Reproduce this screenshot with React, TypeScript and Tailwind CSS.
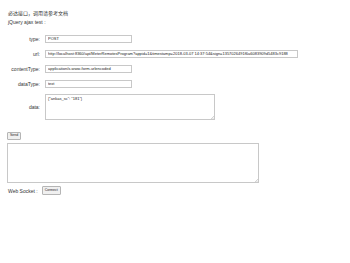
import React from 'react';

const font = { fontFamily: '"Liberation Sans", Arial, "Noto Sans CJK SC", sans-serif' };

const inputCls = 'block h-[8px] border border-[#c8c8c8] bg-white px-[2px] text-[4px] leading-[6px] text-[#222] outline-none';

const Row: React.FC<{ label: string; children: React.ReactNode }> = ({ label, children }) => (
  <div className="flex items-center h-[15px]">
    <div className="w-[41px] text-right text-[5px] leading-[6px] text-[#333] pr-[1px]">{label}</div>
    <div className="ml-[4px] flex">{children}</div>
  </div>
);

const Grip: React.FC = () => (
  <svg width="3" height="3" viewBox="0 0 3 3" className="absolute right-[1px] bottom-[1px]">
    <path d="M0 3 L3 0 M1.5 3 L3 1.5" stroke="#aaa" strokeWidth="0.5" />
  </svg>
);

const App: React.FC = () => {
  return (
    <div className="w-[350px] h-[263px] bg-white text-black leading-none" style={font}>
      <div className="pt-[9px] pl-[8px] text-[5px] leading-[9px] text-[#333]">
        <div>必达接口，调用请参考文档</div>
        <div>jQuery ajax test :</div>
      </div>

      <div className="mt-[4px] flex flex-col">
        <Row label="type:">
          <input readOnly value="POST" className={`${inputCls} w-[87px]`} />
        </Row>
        <Row label="url:">
          <input
            readOnly
            value="http://localhost:8360/api/MeterRemotesProgram?appid=1&timestamp=2018-03-07 14:37:54&sign=1357026491f6a6083909d5483c9188"
            className={`${inputCls} w-[253px] text-[3.6px]`}
          />
        </Row>
        <Row label="contentType:">
          <input readOnly value="application/x-www-form-urlencoded" className={`${inputCls} w-[87px]`} />
        </Row>
        <Row label="dataType:">
          <input readOnly value="text" className={`${inputCls} w-[87px]`} />
        </Row>
        <div className="flex items-center mt-[3px]">
          <div className="w-[41px] text-right text-[5px] leading-[6px] text-[#333] pr-[1px]">data:</div>
          <div className="relative ml-[4px] flex">
            <textarea
              readOnly
              value={'{"ankas_sc": "181"}'}
              className="block w-[170px] h-[26px] border border-[#c8c8c8] px-[2px] py-[1px] text-[4px] leading-[5px] text-[#222] outline-none resize-none"
            />
            <Grip />
          </div>
        </div>
      </div>

      <div className="pl-[7px] mt-[12px] flex">
        <button className="h-[8px] px-[2px] border border-[#b5b5b5] bg-[#f0f0f0] text-[3.5px] leading-none rounded-[1px] text-[#222]">
          Send
        </button>
      </div>
      <div className="pl-[7px] mt-[3px] flex">
        <div className="relative flex">
          <textarea
            readOnly
            className="block w-[252px] h-[40px] border border-[#c8c8c8] outline-none resize-none"
          />
          <Grip />
        </div>
      </div>
      <div className="pl-[8px] mt-[3px] flex items-center">
        <span className="text-[5px] leading-[6px] text-[#333]">Web Socket :</span>
        <button className="ml-[4px] h-[9px] px-[2px] border border-[#b5b5b5] bg-[#f0f0f0] text-[3.5px] leading-none rounded-[1px] text-[#222]">
          Connect
        </button>
      </div>
    </div>
  );
};

export default App;
